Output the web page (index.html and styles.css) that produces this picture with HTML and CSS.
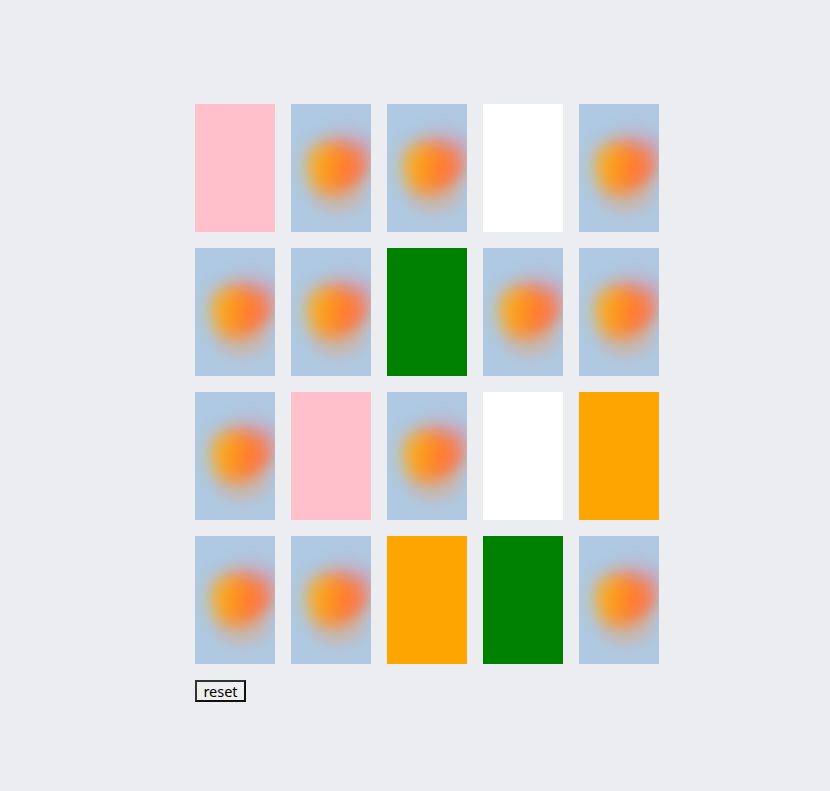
FILE: index.html
```html
<!DOCTYPE html>
<html lang="en">
<head>
    <meta charset="UTF-8">
    <meta name="viewport" content="width=device-width, initial-scale=1.0">
    <title>Memory Game</title>
    <link rel="stylesheet" href="styles.css">
</head>
<body>
    <div class="game">
        <div class="board">
            <div class="card pink"></div>
            <div class="card back"></div>
            <div class="card back"></div>
            <div class="card white"></div>
            <div class="card back"></div>

            <div class="card back"></div>
            <div class="card back"></div>
            <div class="card green"></div>
            <div class="card back"></div>
            <div class="card back"></div>

            <div class="card back"></div>
            <div class="card pink"></div>
            <div class="card back"></div>
            <div class="card white"></div>
            <div class="card orange"></div>

            <div class="card back"></div>
            <div class="card back"></div>
            <div class="card orange"></div>
            <div class="card green"></div>
            <div class="card back"></div>
        </div>
        <button class="reset" type="button">reset</button>
    </div>
</body>
</html>
```

FILE: styles.css
```css
body {
    margin: 0;
    min-height: 791px;
    background-color: #ecedf1;
    font-family: "Noto Sans", Arial, sans-serif;
}
.game {
    width: 464px;
    padding: 104px 0 0 195px;
}
.board {
    display: grid;
    grid-template-columns: repeat(5, 80px);
    grid-auto-rows: 128px;
    gap: 16px;
}
.card {
    background-color: #fff;
}
.pink {
    background-color: #ffc0cb;
}
.white {
    background-color: #fff;
}
.green {
    background-color: #008000;
}
.orange {
    background-color: #ffa500;
}
.back {
    position: relative;
    overflow: hidden;
    background-color: #afc9e2;
}
/* the blurred blob on the card back */
.back::before {
    content: "";
    position: absolute;
    left: 15px;
    top: 39px;
    width: 62px;
    height: 50px;
    border-radius: 35% 65% 70% 30% / 40% 45% 55% 60%;
    background: linear-gradient(98deg, #eeb53e 0%, #f9a826 25%, #ff8c1e 45%, #ff7636 68%, #f08468 100%);
    filter: blur(8px);
    z-index: 1;
}
.back::after {
    content: "";
    position: absolute;
    left: 28px;
    top: 30px;
    width: 56px;
    height: 38px;
    border-radius: 50%;
    background-color: rgba(222, 140, 155, 0.7);
    box-shadow: -8px 40px 0 -3px rgba(226, 165, 120, 0.65);
    filter: blur(10px);
}
.reset {
    display: block;
    margin-top: 16px;
    width: 51px;
    height: 22px;
    padding: 0;
    box-sizing: border-box;
    font-family: "Noto Sans", Arial, sans-serif;
    font-size: 14.5px;
    line-height: 18px;
    color: #000;
    background-color: #efefef;
    border: 2px solid #000;
    border-color: #333 #111 #111 #333;
}
```
